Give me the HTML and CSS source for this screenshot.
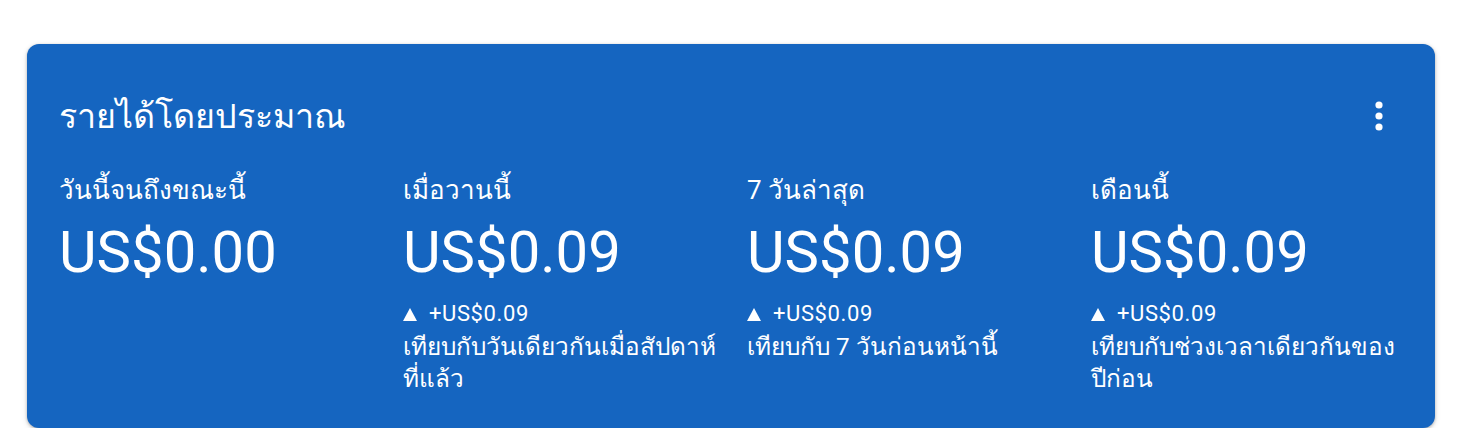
FILE: index.html
```html
<!DOCTYPE html>
<html lang="th">
<head>
<meta charset="utf-8">
<link rel="stylesheet" href="styles.css">
</head>
<body>
<div class="page">
  <section class="card">
    <header class="card-head">
      <h2 class="title">รายได้โดยประมาณ</h2>
      <button class="menu" aria-label="more">
        <svg width="8" height="32" viewBox="0 0 8 32"><circle cx="4" cy="5" r="3.6" fill="#fff"/><circle cx="4" cy="16" r="3.6" fill="#fff"/><circle cx="4" cy="27" r="3.6" fill="#fff"/></svg>
      </button>
    </header>
    <div class="stats">
      <div class="stat">
        <div class="label">วันนี้จนถึงขณะนี้</div>
        <div class="amount">US$0.00</div>
      </div>
      <div class="stat">
        <div class="label">เมื่อวานนี้</div>
        <div class="amount">US$0.09</div>
        <div class="change"><svg class="tri" width="14" height="13" viewBox="0 0 14 13"><path d="M7 0 L14 13 L0 13 Z" fill="#fff"/></svg>+US$0.09</div>
        <div class="compare">เทียบกับวันเดียวกันเมื่อสัปดาห์<wbr><span class="nw">ที่แล้ว</span></div>
      </div>
      <div class="stat">
        <div class="label">7 วันล่าสุด</div>
        <div class="amount">US$0.09</div>
        <div class="change"><svg class="tri" width="14" height="13" viewBox="0 0 14 13"><path d="M7 0 L14 13 L0 13 Z" fill="#fff"/></svg>+US$0.09</div>
        <div class="compare">เทียบกับ 7 วันก่อนหน้านี้</div>
      </div>
      <div class="stat">
        <div class="label">เดือนนี้</div>
        <div class="amount">US$0.09</div>
        <div class="change"><svg class="tri" width="14" height="13" viewBox="0 0 14 13"><path d="M7 0 L14 13 L0 13 Z" fill="#fff"/></svg>+US$0.09</div>
        <div class="compare">เทียบกับช่วงเวลาเดียวกันของ<wbr><span class="nw">ปีก่อน</span></div>
      </div>
    </div>
  </section>
</div>
</body>
</html>
```

FILE: styles.css
```css
* { box-sizing: border-box; }
html, body { margin: 0; background: #fff; }
body { font-family: Roboto, "Noto Sans", sans-serif; color: #fff; }
.page { padding: 44px 27px 0 27px; width: 1462px; }
.card {
  width: 1408px;
  height: 384px;
  background: #1565c0;
  border-radius: 12px;
  box-shadow: 0 1px 3px rgba(0,0,0,0.25), 0 2px 6px rgba(0,0,0,0.12);
  padding: 48px 32px 0 32px;
}
.card-head { display: flex; justify-content: space-between; align-items: center; height: 48px; }
.title { margin: 0; font-weight: 400; font-size: 34px; line-height: 48px; }
.menu { background: none; border: 0; padding: 0; margin-right: 20px; display: flex; }
.stats { display: grid; grid-template-columns: repeat(4, 344px); margin-top: 34px; }
.stat { padding-right: 16px; }
.label { font-size: 26px; line-height: 32px; }
.amount { font-size: 58px; line-height: 72px; margin-top: 10px; }
.change { font-size: 22px; line-height: 32px; margin-top: 10px; letter-spacing: 0.6px; }
.compare { font-size: 24.3px; line-height: 32px; margin-top: 1px; }
.nw { white-space: nowrap; }
.tri { margin-right: 12px; vertical-align: 0; }
```
